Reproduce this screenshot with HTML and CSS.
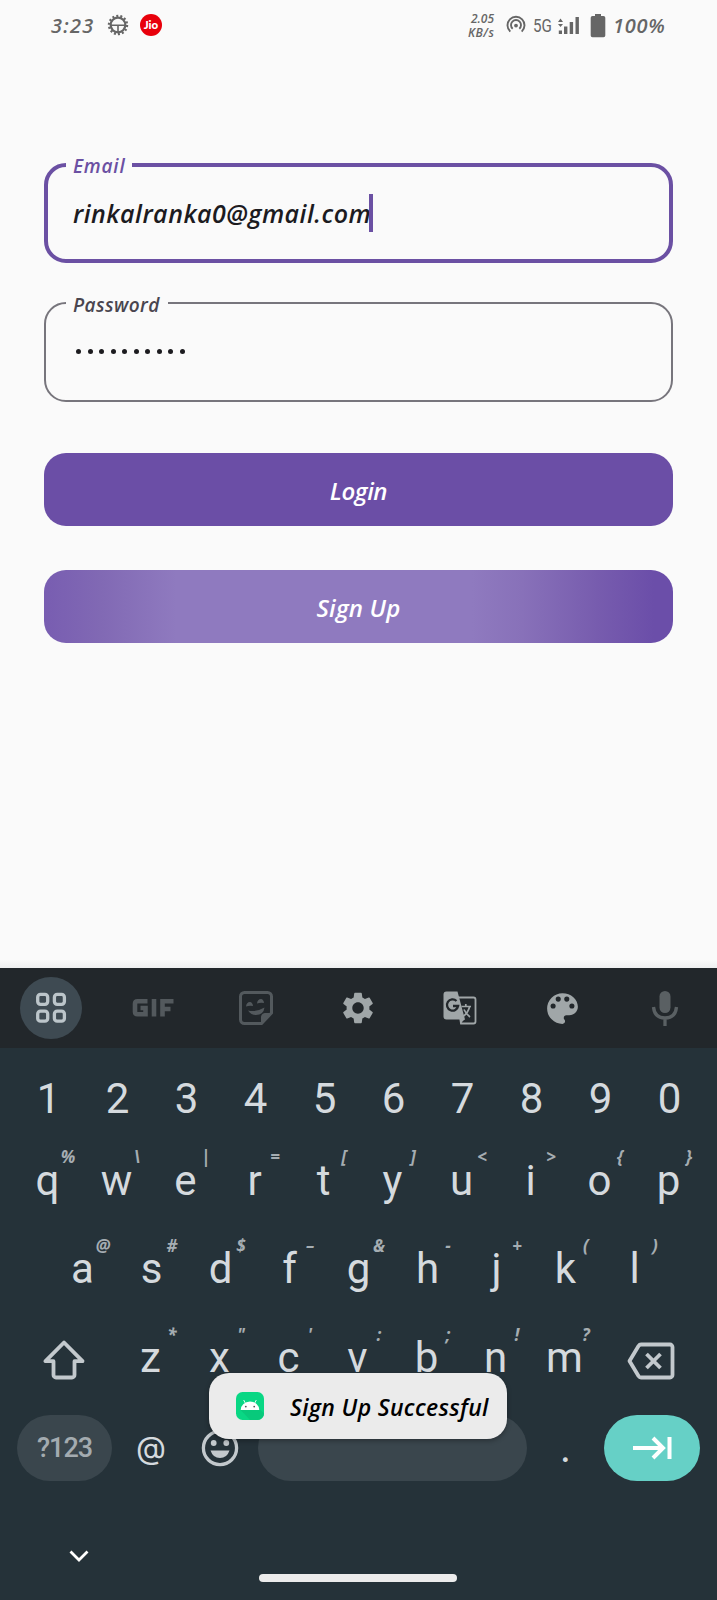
FILE: index.html
```html
<!DOCTYPE html>
<html lang="en">
<head>
<meta charset="utf-8">
<title>Login</title>
<link rel="stylesheet" href="styles.css">
</head>
<body>
<div class="screen">
  <header class="status">
    <span class="clock">3:23</span>
    <svg class="st-gear" width="22" height="22" viewBox="0 0 22 22" fill="none" stroke="#666">
      <circle cx="11" cy="11" r="9" stroke-width="2.4" stroke-dasharray="2 2.04"/>
      <circle cx="11" cy="11" r="7.3" stroke-width="2.2"/>
      <path d="M4 11.2h14M11 11v7" stroke-width="1.6"/>
    </svg>
    <span class="jio">Jio</span>
    <span class="rate"><span class="rate-num">2.05</span><span class="rate-unit">KB/s</span></span>
    <svg class="st-hot" width="20" height="20" viewBox="0 0 20 20" fill="none" stroke="#666" stroke-width="1.9">
      <path d="M4.3 16.6a8.5 8.5 0 1 1 11.4 0"/><path d="M6.7 13.8a5 5 0 1 1 6.6 0"/><circle cx="10" cy="10.6" r="1.9" fill="#666" stroke="none"/>
    </svg>
    <span class="net">5G</span>
    <svg class="st-sig" width="22" height="20" viewBox="0 0 22 20" fill="#666">
      <path d="M0 6l2.500-3.500 2.500 3.500zM0 8l2.500 3 2.500-3zM.8 14.500h3.200v3.500h-3.200zM6 10.500h3.400v7.500h-3.400zM11.700 6h3.400v12h-3.400zM17.500 1h3.400v17h-3.400z"/>
    </svg>
    <svg class="st-bat" width="16" height="24" viewBox="0 0 16 24" fill="#666"><path d="M5 0h6v2h2.500a1.800 1.800 0 0 1 1.800 1.800V21.500a1.800 1.800 0 0 1-1.800 1.800h-11a1.800 1.800 0 0 1-1.800-1.800V3.800A1.800 1.800 0 0 1 2.500 2H5z"/></svg>
    <span class="pct">100%</span>
  </header>

  <main class="form">
    <div class="field field-active">
      <span class="label label-email">Email</span>
      <span class="value">rinkalranka0@gmail.com</span><i class="caret"></i>
    </div>
    <div class="field">
      <span class="label label-pass">Password</span>
      <span class="dots"><i></i><i></i><i></i><i></i><i></i><i></i><i></i><i></i><i></i><i></i></span>
    </div>
    <div class="btn btn-login"><span>Login</span></div>
    <div class="btn btn-signup"><span>Sign Up</span></div>
  </main>

  <section class="keyboard">
    <div class="tools">
      <span class="tool"><span class="tool-round"><svg width="32" height="32" viewBox="0 0 32 32" fill="none" stroke="#bcc5ca" stroke-width="3.300"><rect x="2.700" y="2.400" width="10" height="10" rx="2.800"/><rect x="19.400" y="2.400" width="10" height="10" rx="2.800"/><rect x="2.700" y="19.200" width="10" height="10" rx="2.800"/><rect x="19.400" y="19.200" width="10" height="10" rx="2.800"/></svg></span></span>
      <span class="tool"><svg width="42" height="20" viewBox="0 0 42 20" fill="none" stroke="#53595d" stroke-width="4.600"><path d="M15.500 3.300H5.500Q3 3.300 3 5.800V13.800Q3 16.300 5.500 16.300H13.500V10H8.500M22 1V18.600M30.500 18.600V3.300H41.500M30 11H38.500"/></svg></span>
      <span class="tool"><svg width="36" height="36" viewBox="0 0 36 36" fill="none" stroke="#53595d" stroke-width="3"><path d="M6.500 2.500H29.500a4 4 0 0 1 4 4V23L23.500 33.500H6.500a4 4 0 0 1-4-4V6.500a4 4 0 0 1 4-4z"/><path d="M33.500 23.500H27a3.500 3.500 0 0 0-3.500 3.500V33.500z" fill="#53595d" stroke-width="1"/><path d="M10 20.500q8 2 16.500-3-1 7.500-8.500 7.500-5 0-8-4.500z" fill="#53595d" stroke="none"/><path d="M8 16.500q.5-4.500 4-4.500 2.500.3 3 4-3.500-.8-7 .5zM19 13.500q.5-4.500 4-4.500 2.500.3 3 4-3.500-.8-7 .5z" fill="#53595d" stroke="none"/></svg></span>
      <span class="tool"><svg width="38" height="38" viewBox="0 0 24 24" fill="#a0a6a8"><path d="M19.140 12.940c.04-.3.060-.61.060-.94 0-.32-.02-.64-.07-.94l2.030-1.580a.49.49 0 0 0 .12-.61l-1.920-3.320a.488.488 0 0 0-.59-.22l-2.390.96c-.5-.38-1.030-.7-1.620-.94l-.36-2.540a.484.484 0 0 0-.48-.41h-3.840c-.24 0-.43.17-.47.41l-.36 2.540c-.59.24-1.130.57-1.620.94l-2.390-.96c-.22-.08-.47 0-.59.22L2.740 8.870c-.12.21-.08.47.12.61l2.030 1.580c-.05.3-.09.63-.09.940s.02.64.07.94l-2.030 1.580a.49.49 0 0 0-.12.61l1.920 3.320c.12.22.37.29.59.22l2.390-.96c.5.38 1.030.7 1.620.94l.36 2.540c.05.24.24.41.48.41h3.840c.24 0 .44-.17.47-.41l.36-2.540c.59-.24 1.130-.56 1.620-.94l2.390.96c.22.08.47 0 .59-.22l1.920-3.320c.12-.22.070-.47-.12-.61l-2.010-1.580zM12 15.600c-1.980 0-3.600-1.620-3.600-3.600s1.620-3.600 3.600-3.600 3.600 1.620 3.600 3.600-1.620 3.600-3.600 3.600z"/></svg></span>
      <span class="tool"><svg width="34" height="34" viewBox="0 0 34 34"><path d="M14 6.500h16.500a2 2 0 0 1 2 2V30.500a2 2 0 0 1-2 2H18z" fill="none" stroke="#a0a6a8" stroke-width="1.800"/><path d="M3.500 .5H14.500L22 28.500H3.500a3 3 0 0 1-3-3V3.500a3 3 0 0 1 3-3z" fill="#a0a6a8"/><path d="M22 28l-5 5v-5z" fill="#a0a6a8"/><path d="M13.500 10a5.600 5.600 0 1 0 1.600 5H10" fill="none" stroke="#22272b" stroke-width="2.300"/><path d="M18.500 15.500h9.500M22.800 13v2.500M26.500 16q-1.500 6-6.500 9.500M21 18.500q2 4.500 6 7.500" fill="none" stroke="#a0a6a8" stroke-width="1.700"/></svg></span>
      <span class="tool"><svg width="41" height="41" viewBox="0 0 24 24" fill="#a0a6a8"><path d="M12 3a9 9 0 0 0 0 18c.83 0 1.500-.67 1.500-1.500 0-.39-.15-.74-.39-1.010-.23-.26-.38-.61-.38-.99 0-.83.67-1.500 1.500-1.500H16c2.760 0 5-2.240 5-5 0-4.420-4.030-8-9-8zm-5.500 9a1.500 1.500 0 1 1 0-3 1.500 1.500 0 0 1 0 3zm3-4a1.500 1.500 0 1 1 0-3 1.500 1.500 0 0 1 0 3zm5 0a1.500 1.500 0 1 1 0-3 1.500 1.500 0 0 1 0 3zm3 4a1.500 1.500 0 1 1 0-3 1.500 1.500 0 0 1 0 3z"/></svg></span>
      <span class="tool"><svg width="28" height="36" viewBox="0 0 28 36" fill="none" stroke="#5a6063" stroke-width="3.300"><rect x="8.500" y="1" width="11" height="22" rx="5.500" fill="#5a6063" stroke="none"/><path d="M2.500 17q1 11 11.500 11t11.500-11M14 28v8"/></svg></span>
    </div>

    <div class="row row-num"><span class="key">1</span><span class="key">2</span><span class="key">3</span><span class="key">4</span><span class="key">5</span><span class="key">6</span><span class="key">7</span><span class="key">8</span><span class="key">9</span><span class="key">0</span></div>
    <div class="row row-q"><span class="key">q<sup class="hint">%</sup></span><span class="key">w<sup class="hint">\</sup></span><span class="key">e<sup class="hint">|</sup></span><span class="key">r<sup class="hint">=</sup></span><span class="key">t<sup class="hint">[</sup></span><span class="key">y<sup class="hint">]</sup></span><span class="key">u<sup class="hint">&lt;</sup></span><span class="key">i<sup class="hint">&gt;</sup></span><span class="key">o<sup class="hint">{</sup></span><span class="key">p<sup class="hint">}</sup></span></div>
    <div class="row row-a"><span class="key">a<sup class="hint">@</sup></span><span class="key">s<sup class="hint">#</sup></span><span class="key">d<sup class="hint">$</sup></span><span class="key">f<sup class="hint">–</sup></span><span class="key">g<sup class="hint">&amp;</sup></span><span class="key">h<sup class="hint">-</sup></span><span class="key">j<sup class="hint">+</sup></span><span class="key">k<sup class="hint">(</sup></span><span class="key">l<sup class="hint">)</sup></span></div>
    <div class="row row-z">
      <span class="side"><svg width="42" height="42" viewBox="0 0 42 42" fill="none" stroke="#c3c9cd" stroke-width="3.800" stroke-linejoin="round"><path d="M21 3.500L2.500 22.200H10.500V36a2.500 2.500 0 0 0 2.500 2.500H29a2.500 2.500 0 0 0 2.500-2.500V22.200H39.500z"/></svg></span>
      <span class="key">z<sup class="hint">*</sup></span><span class="key">x<sup class="hint">"</sup></span><span class="key">c<sup class="hint">'</sup></span><span class="key">v<sup class="hint">:</sup></span><span class="key">b<sup class="hint">;</sup></span><span class="key">n<sup class="hint">!</sup></span><span class="key">m<sup class="hint">?</sup></span>
      <span class="side side-del"><svg width="48" height="40" viewBox="0 0 48 40" fill="none" stroke="#c3c9cd" stroke-width="3.800" stroke-linejoin="round"><path d="M14 3.500H43a2.500 2.500 0 0 1 2.500 2.500V34a2.500 2.500 0 0 1-2.500 2.500H14Q12.500 36.500 11.500 35L2.500 20l9-15Q12.500 3.500 14 3.500zM19.500 13l14 14M33.500 13l-14 14"/></svg></span>
    </div>
    <div class="row row-space">
      <span class="pill sym">?123</span>
      <span class="at">@</span>
      <span class="emoji"><svg width="38" height="38" viewBox="0 0 38 38"><circle cx="19" cy="19" r="16.600" fill="none" stroke="#c3c9cd" stroke-width="3.300"/><circle cx="12.700" cy="14" r="2.900" fill="#c3c9cd"/><circle cx="25.300" cy="14" r="2.900" fill="#c3c9cd"/><path d="M9.500 21.500h19q-2.500 7.500-9.500 7.500t-9.500-7.500z" fill="#c3c9cd"/></svg></span>
      <span class="pill space"></span>
      <span class="dot">.</span>
      <span class="pill enter"><svg width="42" height="26" viewBox="0 0 42 26" fill="none" stroke="#fff" stroke-width="4"><path d="M2 13H32M22 3l10 10-10 10M38.500 2v22"/></svg></span>
    </div>
    <div class="nav">
      <svg class="chev" width="22" height="14" viewBox="0 0 22 14" fill="none" stroke="#fff" stroke-width="2.800"><path d="M2.500 2.500l8.500 8.500 8.500-8.500"/></svg>
      <span class="home"></span>
    </div>
  </section>

  <aside class="toast">
    <svg width="28" height="28" viewBox="0 0 28 28"><rect width="28" height="28" rx="6.500" fill="#09d784"/><path d="M4.500 18L8 21.500 14 28H21.500A6.500 6.500 0 0 0 28 21.500L23.500 17z" fill="#08c97b"/><path d="M4.700 18a9.300 8.600 0 0 1 18.600 0z" fill="#fff"/><path d="M9.500 11.500L7.700 8M18.500 11.500L20.300 8" stroke="#fff" stroke-width=".9"/><circle cx="9.800" cy="14.600" r=".9" fill="#555"/><circle cx="18.200" cy="14.600" r=".9" fill="#555"/></svg>
    <span class="toast-text">Sign Up Successful</span>
  </aside>
</div>
</body>
</html>
```
FILE: styles.css
```css
* { box-sizing: border-box; }
body { margin: 0; background: #fafafa; }
.screen {
  position: relative;
  width: 717px;
  height: 1600px;
  overflow: hidden;
  display: flex;
  flex-direction: column;
  font-family: "Open Sans", "Noto Sans", sans-serif;
  font-style: italic;
  font-weight: 600;
}

/* status bar */
.status {
  height: 50px;
  padding: 0 50px 0 51px;
  display: flex;
  align-items: center;
  color: #666;
  white-space: nowrap;
}
.clock { width: 56px; font-size: 20px; letter-spacing: 1.300px; }
.jio {
  width: 22px; height: 22px; margin: 0 0 0 11px;
  border-radius: 50%;
  background: #e8000b;
  color: #fff;
  font: 900 11.500px/21px Lato, sans-serif;
  text-align: center;
}
.rate { width: 30px; margin-left: 306px; display: flex; flex-direction: column; font-size: 12px; padding-top: 1px; }
.rate span { height: 14px; line-height: 14px; }
.rate-num { padding-left: 3px; }
.rate-unit { letter-spacing: .5px; }
.st-hot { margin-left: 8px; }
.net { width: 19px; margin-left: 7px; padding-top: 2px; font: 400 18.500px/24px Roboto, sans-serif; transform: scaleX(.82); transform-origin: 0 50%; }
.st-sig { margin: 2px 0 0 6px; }
.st-bat { margin: 1px 0 0 10px; }
.pct { margin-left: 7px; font-size: 20px; letter-spacing: .7px; }

/* form */
.form {
  height: 918px;
  padding: 113px 44px 0;
  display: flex;
  flex-direction: column;
  background: linear-gradient(#fafafa 0 910px, #eeeff0 918px);
}
.field {
  position: relative;
  height: 100px;
  margin-bottom: 39px;
  padding-left: 28px;
  display: flex;
  align-items: center;
  border: 2px solid #77757c;
  border-radius: 22px;
}
.field-active { padding-left: 25px; border: 4px solid #6b50a3; }
.label {
  position: absolute;
  top: -13px; left: 20px;
  height: 28px;
  padding: 0 7px;
  background: #fafafa;
  color: #49454f;
  font-size: 19px;
  line-height: 28px;
}
.label-email { left: 18px; top: -15px; width: 66px; color: #6b50a3; letter-spacing: .8px; }
.label-pass { width: 102px; letter-spacing: .4px; }
.value { width: 296px; color: #1c1b1f; font-size: 25px; letter-spacing: .5px; white-space: nowrap; line-height: 40px; }
.caret { width: 4px; height: 38px; background: #6b50a3; }
.dots { display: flex; gap: 6.500px; padding: 0 0 2px 2px; }
.dots i { width: 5px; height: 5px; border-radius: 50%; background: #1c1b1f; }
.btn {
  height: 73px;
  padding-top: 1px;
  display: flex;
  align-items: center;
  justify-content: center;
  border-radius: 22px;
  color: #fff;
  font-size: 24px;
  background: #6b4ea6;
}
.btn-login { margin-top: 12px; letter-spacing: -.4px; }
.btn-signup {
  margin-top: 44px;
  letter-spacing: .2px;
  background: linear-gradient(90deg, #785db1 0, #8169b4 9%, #8f7abf 21%, #8f7abf 68%, #8871b9 76%, #775cae 88%, #6b4ea9 97%);
}

/* keyboard */
.keyboard {
  height: 632px;
  background: #253239;
  font-family: Roboto, sans-serif;
  font-style: normal;
  font-weight: 400;
  color: #d5dade;
}
.tools { height: 80px; display: grid; grid-template-columns: repeat(7, 102.300px); background: #22272b; }
.tool { display: flex; align-items: center; justify-content: center; }
.tool-round { width: 62px; height: 62px; border-radius: 50%; background: #3e4a52; display: flex; align-items: center; justify-content: center; }
.row { display: flex; font-size: 42px; }
.key { position: relative; width: 69px; text-align: center; }
.row-num { height: 91px; padding: 11px 0 0 14px; line-height: 80px; }
.row-q { height: 82px; padding-left: 13px; line-height: 83px; }
.row-a { height: 94px; padding-left: 48px; line-height: 95px; }
.row-z { height: 84px; padding-left: 11px; line-height: 86px; }
.hint {
  position: absolute;
  left: 45px; top: 6px;
  width: 20px;
  font: italic 700 17px/24px "Open Sans", sans-serif;
  color: #a5adb2;
  text-align: center;
}
.row-a .hint { top: 13px; }
.row-z .hint { left: 46px; top: 8px; }
.side { width: 105px; display: flex; align-items: center; justify-content: center; padding-top: 6px; }
.side-del { padding: 8px 1px 0 0; }
.row-space { height: 97px; padding-left: 17px; align-items: center; }
.pill { height: 66px; border-radius: 33px; background: #3a464d; display: flex; align-items: center; justify-content: center; }
.sym { width: 95px; font-size: 27px; font-weight: 500; letter-spacing: -1px; color: #a3abb0; }
.at { width: 78px; text-align: center; font: 400 31px/60px Inter, sans-serif; }
.emoji { width: 60px; display: flex; justify-content: center; }
.space { width: 269px; margin-left: 8px; }
.dot { width: 77px; text-align: center; }
.enter { width: 96px; background: #66d0c6; }
.nav { height: 104px; display: grid; grid-template-rows: 53px 25px; padding-top: 53px; }
.chev { margin-left: 68px; height: 14px; }
.home { width: 198px; height: 8px; margin: -28px 0 0 259px; border-radius: 4px; background: #ececec; }

/* toast floats above the keyboard */
.toast {
  position: absolute;
  left: 209px; top: 1373px;
  width: 298px; height: 66px;
  padding-left: 27px;
  display: flex;
  align-items: center;
  gap: 26px;
  border-radius: 20px;
  background: #ebebeb;
  color: #000;
  box-shadow: 0 2px 5px rgba(0,0,0,.3);
}
.toast-text { padding-top: 1px; font-size: 23px; letter-spacing: .32px; white-space: nowrap; }
```
